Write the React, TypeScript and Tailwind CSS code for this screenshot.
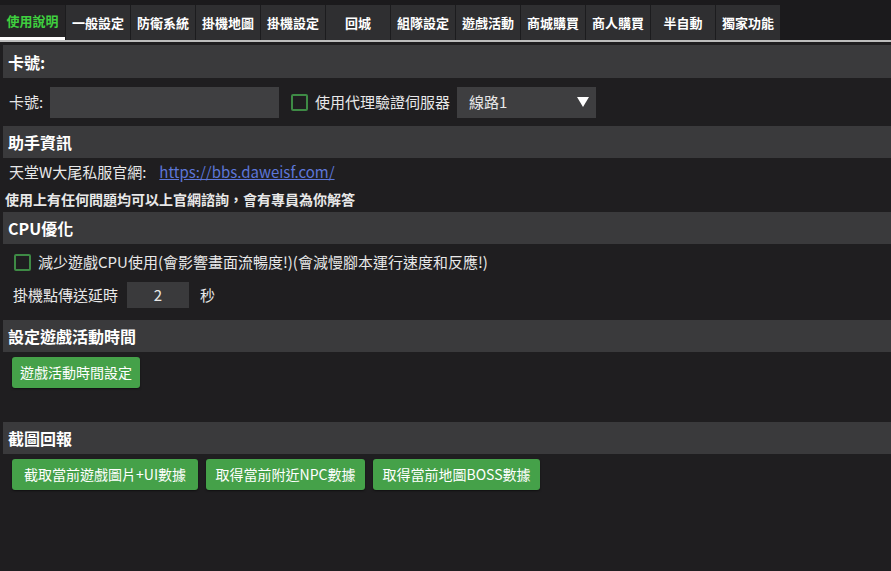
import React from "react";

const tabs = ["使用說明","一般設定","防衛系統","掛機地圖","掛機設定","回城","組隊設定","遊戲活動","商城購買","商人購買","半自動","獨家功能"];

const font = { fontFamily: '"Noto Sans CJK TC", "Noto Sans", sans-serif' };

function Header({ children }: { children: React.ReactNode }) {
  return (
    <div className="ml-[3px] h-[32px] bg-[#3a3a3c] flex items-center pl-[5px] text-[16px] font-bold text-white">
      {children}
    </div>
  );
}

function Check() {
  return <span className="inline-block w-[17px] h-[17px] border-2 border-[#3e8a45] rounded-[2px] bg-[#1f1e20]" />;
}

function GreenBtn({ children, w }: { children: React.ReactNode; w: string }) {
  return (
    <button className={`h-[31px] ${w} bg-[#45a149] rounded-[3px] text-white text-[14px] flex items-center justify-center shadow-[0_1px_2px_rgba(0,0,0,0.5)]`}>
      {children}
    </button>
  );
}

export default function App() {
  return (
    <div style={font} className="w-[891px] h-[571px] bg-[#1f1e20] text-[#e8e8e8] overflow-hidden">
      <div className="h-[42px] bg-[#1b1a1c] pt-[5px] border-b-2 border-[#bdbdbd] flex">
        {tabs.map((t, i) => (
          <div
            key={t}
            className={
              i === 0
                ? "w-[65px] h-[35px] flex items-center justify-center text-[13px] font-bold text-[#3fcf3f] bg-[#262527] border-b-[3px] border-white"
                : "w-[65px] h-[35px] flex items-center justify-center text-[13px] font-bold text-white bg-[#2f2f31] border-l border-[#1c1c1e]"
            }
          >
            {t}
          </div>
        ))}
      </div>

      <div className="pt-[3px]">
        <div className="ml-[3px] h-[33px] bg-[#3a3a3c] flex items-center pl-[5px] text-[16px] font-bold text-white">卡號:</div>
        <div className="h-[48px] flex items-center pl-[9px] text-[15px]">
          <span className="w-[41px]">卡號:</span>
          <div className="w-[229px] h-[31px] bg-[#3f3f41]" />
          <span className="ml-[12px] flex"><Check /></span>
          <span className="ml-[7px] w-[142px]">使用代理驗證伺服器</span>
          <div className="w-[139px] h-[31px] bg-[#3e3e40] flex items-center justify-between pl-[12px] pr-[6px]">
            <span>線路1</span>
            <svg width="14" height="12" viewBox="0 0 14 12"><path d="M1 1h12L7 11z" fill="#fff" /></svg>
          </div>
        </div>

        <Header>助手資訊</Header>
        <div className="h-[28px] flex items-center pl-[9px] text-[15px]">
          <span>天堂W大尾私服官網:</span>
          <a className="ml-[13px] text-[#5d76d8] underline">https://bbs.daweisf.com/</a>
        </div>
        <div className="h-[26px] flex items-center pl-[5px] text-[14px] font-bold">
          使用上有任何問題均可以上官網諮詢，會有專員為你解答
        </div>

        <Header>CPU優化</Header>
        <div className="h-[37px] flex items-center pl-[14px] text-[15px]">
          <Check />
          <span className="ml-[7px]">減少遊戲CPU使用(會影響畫面流暢度!)(會減慢腳本運行速度和反應!)</span>
        </div>
        <div className="h-[28px] flex items-center pl-[13px] text-[15px]">
          <span className="w-[114px]">掛機點傳送延時</span>
          <div className="w-[62px] h-[26px] bg-[#3a3a3c] flex items-center justify-center">2</div>
          <span className="ml-[11px]">秒</span>
        </div>
        <div className="h-[11px]" />

        <Header>設定遊戲活動時間</Header>
        <div className="pl-[12px] pt-[5px] h-[70px]">
          <GreenBtn w="w-[128px]">遊戲活動時間設定</GreenBtn>
        </div>

        <Header>截圖回報</Header>
        <div className="pl-[12px] pt-[5px] flex gap-[8px]">
          <GreenBtn w="w-[186px]">截取當前遊戲圖片+UI數據</GreenBtn>
          <GreenBtn w="w-[159px]">取得當前附近NPC數據</GreenBtn>
          <GreenBtn w="w-[167px]">取得當前地圖BOSS數據</GreenBtn>
        </div>
      </div>
    </div>
  );
}
